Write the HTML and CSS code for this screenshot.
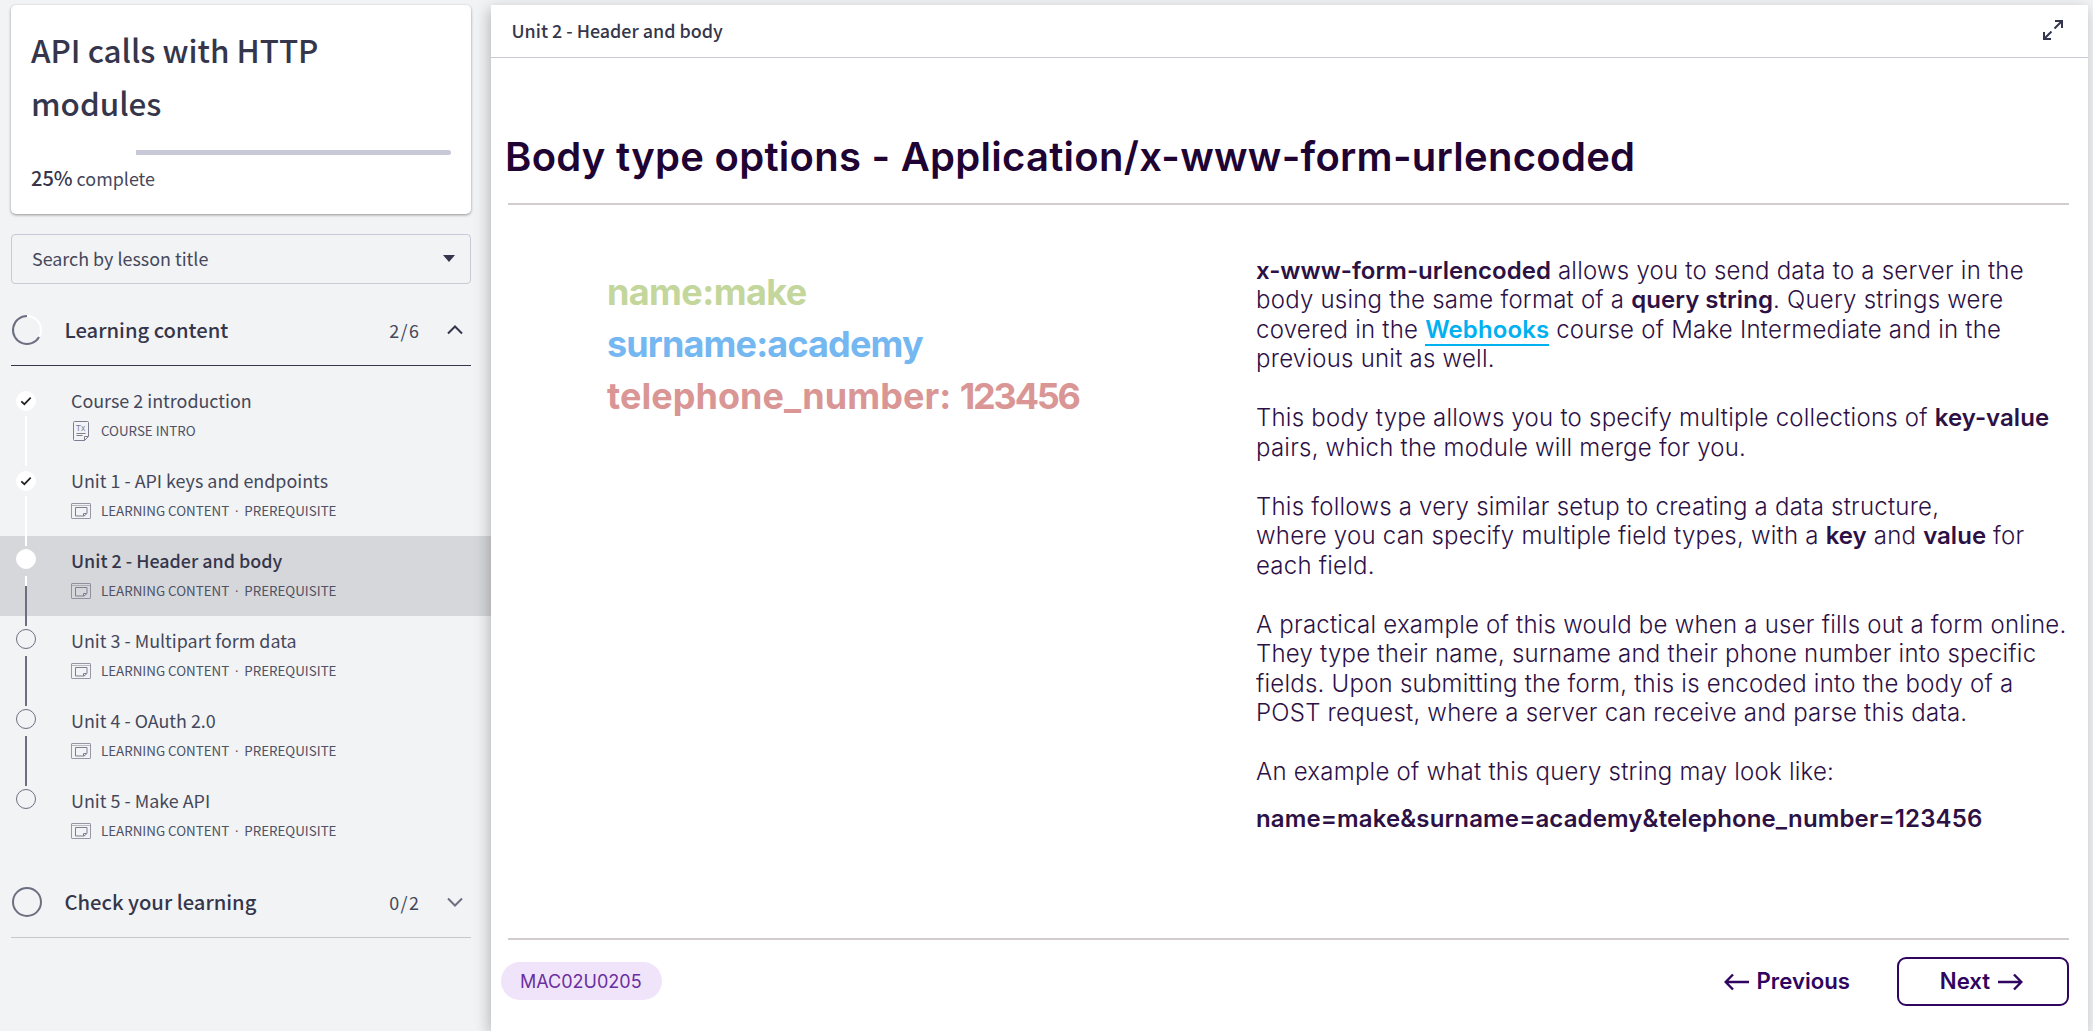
FILE: index.html
```html
<!DOCTYPE html>
<html lang="en">
<head>
<meta charset="utf-8">
<title>API calls with HTTP modules</title>
<link rel="stylesheet" href="styles.css">
</head>
<body>
<svg width="0" height="0" class="sprite" aria-hidden="true">
  <symbol id="i-window" viewBox="0 0 20 16">
    <g fill="none" stroke="currentColor">
      <rect x=".5" y=".5" width="19" height="15" rx=".6" stroke-opacity=".8"/>
      <path d="M1 2.5h18" stroke-opacity=".5"/>
      <path d="M4.500 4.500h11.500v6L13 13H4.500z"/>
      <path d="M15.500 10.500H12.500v2.500"/>
    </g>
  </symbol>
  <symbol id="i-up" viewBox="0 0 16 10"><path d="M1 8.500 8 1.500l7 7" fill="none" stroke="currentColor" stroke-width="2"/></symbol>
  <symbol id="i-down" viewBox="0 0 16 10"><path d="M1 1.500l7 7 7-7" fill="none" stroke="currentColor" stroke-width="2"/></symbol>
  <symbol id="i-check" viewBox="0 0 20 20"><path d="M5.300 10.300l3.100 2.900 6.300-6.500" fill="none" stroke="currentColor" stroke-width="1.700"/></symbol>
</svg>
<div class="app">
  <aside class="sidebar">
    <section class="card">
      <h1>API calls with HTTP<br>modules</h1>
      <div class="progress"><div class="progress-fill" style="width:25%"></div></div>
      <p class="complete"><b>25%</b> complete</p>
    </section>
    <div class="search"><span>Search by lesson title</span><svg width="12" height="7"><path d="M0 0h12L6 7z" fill="#35364b"/></svg></div>

    <div class="section open">
      <svg class="ring" width="32" height="32" viewBox="0 0 32 32" fill="none" stroke-width="2">
        <circle cx="16" cy="16" r="14" stroke="#fff"/>
        <path d="M16 2A14 14 0 1 0 28.100 23" stroke="#6c6f80"/>
      </svg>
      <h2>Learning content</h2><span class="count">2/6</span><svg class="chev" width="16" height="10"><use href="#i-up"/></svg>
    </div>
    <ul class="lessons">
      <li class="done">
        <div class="track"><span class="dot"><svg width="20" height="20"><use href="#i-check"/></svg></span><span class="line"></span></div>
        <div class="info"><p class="name">Course 2 introduction</p>
          <p class="meta"><svg width="20" height="20" viewBox="0 0 20 20" fill="none" stroke="currentColor"><path d="M3.500.5h13q1 0 1 1V15.500l-4 4h-10q-1 0-1-1v-17q0-1 1-1z"/><path d="M17.500 15.500h-4v4M5.500 12.500h9M5.500 14.500h6"/><text x="4.800" y="10" fill="currentColor" stroke="none" class="tx">Tx</text></svg>COURSE INTRO</p></div>
      </li>
      <li class="done">
        <div class="track"><span class="dot"><svg width="20" height="20"><use href="#i-check"/></svg></span><span class="line"></span></div>
        <div class="info"><p class="name">Unit 1 - API keys and endpoints</p><p class="meta"><svg width="20" height="16"><use href="#i-window"/></svg>LEARNING CONTENT<i>·</i>PREREQUISITE</p></div>
      </li>
      <li class="active">
        <div class="track"><span class="dot"></span><span class="line"></span></div>
        <div class="info"><p class="name">Unit 2 - Header and body</p><p class="meta"><svg width="20" height="16"><use href="#i-window"/></svg>LEARNING CONTENT<i>·</i>PREREQUISITE</p></div>
      </li>
      <li>
        <div class="track"><span class="dot"></span><span class="line"></span></div>
        <div class="info"><p class="name">Unit 3 - Multipart form data</p><p class="meta"><svg width="20" height="16"><use href="#i-window"/></svg>LEARNING CONTENT<i>·</i>PREREQUISITE</p></div>
      </li>
      <li>
        <div class="track"><span class="dot"></span><span class="line"></span></div>
        <div class="info"><p class="name">Unit 4 - OAuth 2.0</p><p class="meta"><svg width="20" height="16"><use href="#i-window"/></svg>LEARNING CONTENT<i>·</i>PREREQUISITE</p></div>
      </li>
      <li>
        <div class="track"><span class="dot"></span></div>
        <div class="info"><p class="name">Unit 5 - Make API</p><p class="meta"><svg width="20" height="16"><use href="#i-window"/></svg>LEARNING CONTENT<i>·</i>PREREQUISITE</p></div>
      </li>
    </ul>
    <div class="section">
      <svg class="ring" width="32" height="32" viewBox="0 0 32 32" fill="none"><circle cx="16" cy="16" r="14" stroke="#6c6f80" stroke-width="2"/></svg>
      <h2>Check your learning</h2><span class="count">0/2</span><svg class="chev" width="16" height="10"><use href="#i-down"/></svg>
    </div>
  </aside>

  <main class="viewer">
    <header class="topbar"><span>Unit 2 - Header and body</span>
      <svg width="20" height="20" viewBox="0 0 20 20" fill="none" stroke="#35364b" stroke-width="2"><path d="M12 1h7v7M19 1l-7.500 7.500M8 19H1v-7M1 19l7.500-7.500"/></svg>
    </header>
    <article class="content">
      <h2 class="title">Body type options - Application/x-www-form-urlencoded</h2>
      <hr>
      <div class="columns">
        <div class="pairs">
          <p class="green">name:make</p>
          <p class="blue">surname:academy</p>
          <p class="red">telephone_number: <span>123456</span></p>
        </div>
        <div class="text">
          <p><b>x-www-form-urlencoded</b> allows you to send data to a server in the<br>body using the same format of a <b>query string</b>. Query strings were<br>covered in the <a>Webhooks</a> course of Make Intermediate and in the<br>previous unit as well.</p>
          <p>This body type allows you to specify multiple collections of <b>key-value</b><br>pairs, which the module will merge for you.</p>
          <p>This follows a very similar setup to creating a data structure,<br>where you can specify multiple field types, with a <b>key</b> and <b>value</b> for<br>each field.</p>
          <p>A practical example of this would be when a user fills out a form online.<br>They type their name, surname and their phone number into specific<br>fields. Upon submitting the form, this is encoded into the body of a<br>POST request, where a server can receive and parse this data.</p>
          <p>An example of what this query string may look like:</p>
          <p class="query">name=make&amp;surname=academy&amp;telephone_number=123456</p>
        </div>
      </div>
      <hr>
      <footer class="footer">
        <span class="pill">MAC02U0205</span>
        <nav>
          <span class="prev"><svg width="25" height="18" viewBox="0 0 25 18" fill="none" stroke="currentColor" stroke-width="2.400"><path d="M25 9H2M9 1.500 1.700 9 9 16.500"/></svg><span>Previous</span></span>
          <span class="next"><span>Next</span><svg width="25" height="18" viewBox="0 0 25 18" fill="none" stroke="currentColor" stroke-width="2.400"><path d="M0 9h23M16 1.500 23.300 9 16 16.500"/></svg></span>
        </nav>
      </footer>
    </article>
  </main>
</div>
</body>
</html>
```
FILE: styles.css
```css
* { box-sizing: border-box; margin: 0; padding: 0; }
html, body { height: 100%; overflow: hidden; }
body {
  background: #f1f3f5;
  color: #35364b;
  font: 400 17.9px/26px "Noto Sans CJK SC", "Open Sans", sans-serif;
}
.sprite { position: absolute; }
.app { display: flex; height: 100vh; }

/* Sidebar */
.sidebar { width: 491px; flex: none; padding-top: 5px; }
.card {
  margin: 0 20px 0 11px;
  height: 209px;
  padding: 17.5px 20px 0;
  background: #fff;
  border-radius: 5px;
  box-shadow: 0 1px 3px rgba(0, 0, 0, .4);
}
.card h1 { font-size: 31.4px; font-weight: 500; line-height: 53px; white-space: nowrap; }
.progress { margin-top: 21.5px; height: 5px; border-radius: 3px; background: #c7c9d6; }
.progress-fill { height: 5px; background: #fff; }
.complete { margin-top: 10px; color: #45475a; }
.complete b { font-weight: 500; font-size: 20px; color: #35364b; }
.search {
  margin: 20px 20px 0 11px;
  height: 50px;
  padding: 0 15px 2px 20px;
  display: flex;
  align-items: center;
  justify-content: space-between;
  border: 1px solid #c7c9d6;
  border-radius: 4px;
  color: #45475a;
}
.section {
  margin: 11px 20px 0 11px;
  height: 71px;
  display: flex;
  align-items: center;
  border-bottom: 1px solid #c6c8ce;
}
.section.open { border-bottom-color: #35364b; }
.ring { margin-right: 21.500px; }
.section h2 { flex: 1; font-size: 20.200px; font-weight: 500; }
.count { letter-spacing: 1.500px; color: #45475a; }
.chev { margin: 0 8px 0 26.500px; color: #6c6f80; }
.open .chev { color: #35364b; }

.lessons { list-style: none; margin-top: 10px; }
.lessons li { height: 80px; display: flex; }
.lessons li.active { background: #d6d7db; }
.track { width: 71px; padding: 13px 0 0 16px; }
.dot {
  display: block;
  width: 20px;
  height: 20px;
  border: 1px solid #6c6f80;
  border-radius: 50%;
  background: #f1f3f5;
}
.dot svg { display: block; margin: -1px; color: #222; }
.line { display: block; width: 2px; height: 50px; margin: 7px 0 0 9px; background: #6c6f80; position: relative; }
.done .track { padding-top: 15px; }
.done .dot, .active .dot { border-color: #fff; background: #fff; }
.done .line { background: #fff; margin-top: 5px; }
.active .line { background: linear-gradient(#fff 10px, #6c6f80 10px); }
.name { margin-top: 11px; white-space: nowrap; color: #45475a; }
.active .name { font-weight: 500; color: #35364b; }
.meta { margin-top: 7px; height: 22px; display: flex; align-items: center; font-size: 13.350px; line-height: 22px; color: #4f5164; }
.meta svg { width: 20px; margin-right: 10px; color: #7d7f90; }
.meta i { font: 400 13px/22px "Open Sans", sans-serif; width: 15px; text-align: center; }
.tx { font: 400 8.500px "Liberation Sans", sans-serif; }

/* Lesson viewer */
.viewer {
  position: relative;
  width: 1597px;
  margin-top: 5px;
  display: flex;
  flex-direction: column;
  background: #fff;
  box-shadow: -2px 4px 14px rgba(0, 0, 0, .25);
}
.topbar {
  height: 53px;
  padding: 0 25px 2px 20.500px;
  display: flex;
  align-items: center;
  justify-content: space-between;
  border-bottom: 1px solid #c7c9d6;
  font-weight: 500;
}
.content {
  flex: 1;
  display: flex;
  flex-direction: column;
  padding: 75px 19px 0 17px;
  font-family: Inter, sans-serif;
  color: #1f0433;
}
.content hr { border: 0; height: 2px; background: #d2ccd0; }
.title { margin: 0 0 22px -3px; font-size: 40px; font-weight: 600; line-height: 48px; letter-spacing: .27px; white-space: nowrap; }
.columns { height: 733px; display: flex; }
.pairs { width: 748px; padding: 60.500px 0 0 99px; font-size: 36px; font-weight: 700; line-height: 52px; letter-spacing: -.7px; white-space: nowrap; }
.green { color: #c3d69b; letter-spacing: -.6px; }
.blue { color: #74b7f1; letter-spacing: -.85px; }
.red { color: #d99694; letter-spacing: .05px; }
.red span { letter-spacing: -2.200px; }
.text { padding-top: 50.500px; font-size: 24px; font-weight: 300; line-height: 29.520px; letter-spacing: .23px; white-space: nowrap; color: #2d1145; }
.text p { margin-bottom: 29.520px; }
.text b { font-weight: 600; letter-spacing: .03px; }
.text a { color: #00b0f0; font-weight: 600; letter-spacing: .1px; border-bottom: 2px solid #00b0f0; }
.text .query { margin-top: -12.300px; font-weight: 600; letter-spacing: .13px; }
.footer { display: flex; justify-content: space-between; padding-top: 17px; }
.pill {
  width: 161px;
  height: 38px;
  margin: 5px 0 0 -7px;
  padding-left: 19px;
  border-radius: 19px;
  background: #f0e4fb;
  color: #6b2fa0;
  font-size: 18px;
  line-height: 39px;
}
.footer nav { display: flex; color: #30055f; font-size: 22.200px; font-weight: 600; }
.prev, .next { display: flex; align-items: center; gap: 8px; height: 49px; }
.prev > span, .next > span { padding-bottom: 2px; }
.prev { margin-right: 47px; }
.next { width: 172px; padding-right: 3px; justify-content: center; border: 2px solid #30055f; border-radius: 9px; }
```
